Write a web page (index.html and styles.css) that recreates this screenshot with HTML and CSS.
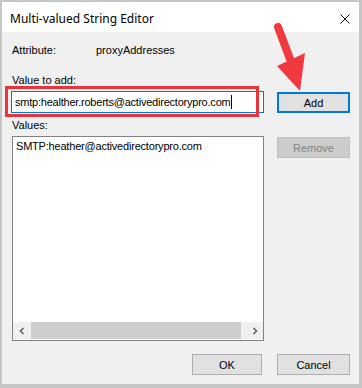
FILE: index.html
```html
<html lang="en">
<head>
  <meta charset="UTF-8">
  <meta name="viewport" content="width=device-width, initial-scale=1.0">
  <title>Multi-valued String Editor</title>
  <link rel="stylesheet" href="styles.css">
</head>
<body>
  <div class="window">
    <div class="titlebar">
      <span class="title">Multi-valued String Editor</span>
      <svg class="close" width="10" height="10" viewBox="0 0 10 10">
        <path d="M0.5 0.5 L9.5 9.5 M9.5 0.5 L0.5 9.5" stroke="#111" stroke-width="1" fill="none"/>
      </svg>
    </div>
    <div class="content">
      <div class="attr-row">
        <span class="attr-label">Attribute:</span>
        <span class="attr-value">proxyAddresses</span>
      </div>

      <div class="label label-add">Value to add:</div>
      <div class="add-row">
        <div class="input-wrap">
          <div class="text-input">smtp:healther.roberts@activedirectorypro.com<span class="caret"></span></div>
          <div class="highlight"></div>
        </div>
        <button class="btn btn-default">Add</button>
      </div>

      <div class="label label-values">Values:</div>
      <div class="values-row">
        <div class="listbox">
          <div class="list-items">
            <div class="list-item">SMTP:heather@activedirectorypro.com</div>
          </div>
          <div class="hscroll">
            <div class="scroll-arrow">
              <svg width="8" height="8" viewBox="0 0 8 8"><path d="M5.5 1 L2.5 4 L5.5 7" stroke="#606060" stroke-width="1.6" fill="none"/></svg>
            </div>
            <div class="scroll-track"><div class="scroll-thumb"></div></div>
            <div class="scroll-arrow">
              <svg width="8" height="8" viewBox="0 0 8 8"><path d="M2.5 1 L5.5 4 L2.5 7" stroke="#606060" stroke-width="1.6" fill="none"/></svg>
            </div>
          </div>
        </div>
        <button class="btn btn-disabled" disabled>Remove</button>
      </div>

      <div class="footer">
        <button class="btn btn-ok">OK</button>
        <button class="btn">Cancel</button>
      </div>
    </div>

    <!-- annotation arrow pointing at the Add button -->
    <svg class="arrow" width="50" height="80" viewBox="0 0 50 80">
      <line x1="10" y1="8" x2="22" y2="40" stroke="#f03a3f" stroke-width="8" stroke-linecap="round"/>
      <polygon points="9,47 37,34 32,72" fill="#f03a3f"/>
    </svg>
  </div>
</body>
</html>
```

FILE: styles.css
```css
body {
  margin: 0;
  padding: 0;
  font-family: "Liberation Sans", Arial, sans-serif;
  font-size: 11px;
  color: #000;
}

.window {
  position: relative;
  width: 357px;
  height: 382px;
  border-style: solid;
  border-color: #c6c6c6;
  border-width: 2px 3px 4px 2px;
  background-color: #f0f0f0;
  display: flex;
  flex-direction: column;
}

.titlebar {
  height: 30px;
  background-color: #fff;
  display: flex;
  align-items: center;
  justify-content: space-between;
  padding: 0 9px 0 8px;
}

.title {
  font-family: "Noto Sans", sans-serif;
  font-size: 12px;
  color: #000;
  margin-top: 2px;
}

.close {
  margin-top: 4px;
}

.content {
  padding: 11px 9px 0 10px;
}

.attr-row {
  display: flex;
  line-height: 14px;
}

.attr-label {
  width: 84px;
}

.label {
  line-height: 14px;
}

.label-add {
  margin-top: 16px;
}

.label-values {
  margin-top: 5px;
}

.add-row {
  display: flex;
  justify-content: space-between;
  margin-top: 4px;
}

.input-wrap {
  position: relative;
  margin-left: -1px;
}

.text-input {
  box-sizing: border-box;
  width: 253px;
  height: 22px;
  border: 1px solid #0078d7;
  background-color: #fff;
  padding: 0 0 0 3px;
  line-height: 20px;
  white-space: nowrap;
  letter-spacing: -0.22px;
}

.caret {
  display: inline-block;
  width: 1px;
  height: 14px;
  margin-left: 1px;
  background-color: #000;
  vertical-align: -3px;
}

.highlight {
  position: absolute;
  left: -6px;
  top: -5px;
  width: 248px;
  height: 25px;
  border: 3px solid #e8353c;
}

.btn {
  box-sizing: border-box;
  width: 73px;
  height: 21px;
  border: 1px solid #adadad;
  background-color: #e1e1e1;
  font-family: "Liberation Sans", Arial, sans-serif;
  font-size: 11px;
  color: #000;
  padding: 0;
}

.btn-default {
  border: 2px solid #0078d7;
  margin-top: 1px;
}

.btn-disabled {
  border-color: #bfbfbf;
  background-color: #cccccc;
  color: #838383;
  margin-top: 1px;
}

.values-row {
  display: flex;
  justify-content: space-between;
  margin-top: 4px;
}

.listbox {
  box-sizing: border-box;
  width: 252px;
  height: 205px;
  border: 1px solid #828282;
  background-color: #fff;
  display: flex;
  flex-direction: column;
}

.list-items {
  flex: 1;
  padding: 2px 3px;
}

.list-item {
  line-height: 14px;
  letter-spacing: -0.2px;
}

.hscroll {
  height: 17px;
  display: flex;
  background-color: #f0f0f0;
  margin: 0 0 1px 0;
}

.scroll-arrow {
  width: 17px;
  display: flex;
  align-items: center;
  justify-content: center;
}

.scroll-track {
  flex: 1;
  padding: 0 1px;
}

.scroll-thumb {
  height: 100%;
  width: 210px;
  background-color: #cdcdcd;
}

.footer {
  display: flex;
  justify-content: flex-end;
  gap: 15px;
  margin-top: 13px;
}

.btn-ok {
  width: 70px;
}

.arrow {
  position: absolute;
  left: 266px;
  top: 17px;
}
```
